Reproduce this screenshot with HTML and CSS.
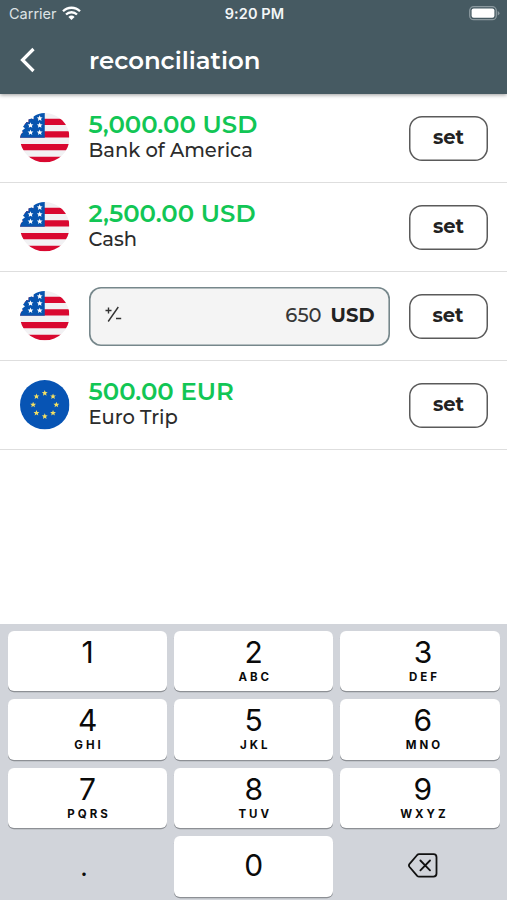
FILE: index.html
```html
<!DOCTYPE html>
<html lang="en">
<head>
<meta charset="utf-8">
<title>reconciliation</title>
<link rel="stylesheet" href="styles.css">
</head>
<body>
<svg width="0" height="0" class="defs">
  <defs>
    <clipPath id="round"><path d="M24.5 0A24.5 24.5 0 1 1 0 24.5L1 21 3 19 2 17.5 5 15 3 13.5 6.5 9 8.5 9.5 8.5 6.5 11.5 5.5 13.5 6.5 13.5 3.5Q18 0 24.5 0Z"/></clipPath>
    <path id="star" d="M0-3 .8-1 2.9-.9 1.3.4 1.8 2.5 0 1.3-1.8 2.5-1.3.4-2.9-.9-.8-1Z"/>
    <symbol id="us" viewBox="0 0 49 49">
      <g clip-path="url(#round)">
        <path fill="#f2f1f3" d="M0 0h49v49H0z"/>
        <path fill="#d90830" d="M0 5.8h49v6.2H0zM0 18h49v6.3H0zM0 30.6h49v6.2H0zM0 43.2h49V49H0z"/>
        <path fill="#0754af" d="M0 0h24.5v24.4H0z"/>
        <g fill="#fff">
          <use href="#star" x="19.5" y="5.3"/>
          <use href="#star" x="10.4" y="12.2"/><use href="#star" x="19.5" y="12.2"/>
          <use href="#star" x="10.4" y="19.3"/><use href="#star" x="19.5" y="19.3"/>
        </g>
      </g>
    </symbol>
    <symbol id="eu" viewBox="0 0 49 49">
      <circle cx="24.5" cy="24.5" r="24.5" fill="#0754b4"/>
      <g fill="#f3df62">
        <use href="#star" x="24.5" y="13"/><use href="#star" x="32.7" y="16.3"/>
        <use href="#star" x="36" y="24.5"/><use href="#star" x="32.7" y="32.7"/>
        <use href="#star" x="24.5" y="36"/><use href="#star" x="16.3" y="32.7"/>
        <use href="#star" x="13" y="24.5"/><use href="#star" x="16.3" y="16.3"/>
      </g>
    </symbol>
  </defs>
</svg>
<div class="screen">
  <header class="header">
    <div class="status">
      <div class="carrier">Carrier
        <svg width="19" height="15" viewBox="0 0 19 15" fill="none" stroke="#fff" stroke-width="2.3">
          <path d="M1 5.3a12 12 0 0 1 17 0"/><path d="M4 8.5a7.8 7.8 0 0 1 11 0"/>
          <path d="M9.5 14 6.4 10.9a4.4 4.4 0 0 1 6.2 0Z" fill="#fff" stroke="none"/>
        </svg>
      </div>
      <div class="time">9:20 PM</div>
      <svg class="battery" width="31" height="15" viewBox="0 0 31 15">
        <rect x=".7" y=".7" width="26.6" height="13" rx="4" fill="none" stroke="#8b999f" stroke-width="1.3"/>
        <rect x="2.6" y="2.6" width="22.8" height="9.2" rx="2" fill="#fff"/>
        <path d="M28.7 5v4.5q1.8-.7 1.8-2.2T28.7 5Z" fill="#8b999f"/>
      </svg>
    </div>
    <div class="titlebar">
      <svg class="back" width="16" height="26" viewBox="0 0 16 26" fill="none" stroke="#fff" stroke-width="3.2"><path d="M13.5 2 2.5 13l11 11"/></svg>
      <h1 class="title">reconciliation</h1>
    </div>
  </header>
  <main class="list">
    <div class="row">
      <svg class="flag"><use href="#us"/></svg>
      <div class="info"><div class="amount">5,000.00 USD</div><div class="name">Bank of America</div></div>
      <button class="set">set</button>
    </div>
    <div class="row">
      <svg class="flag"><use href="#us"/></svg>
      <div class="info"><div class="amount">2,500.00 USD</div><div class="name">Cash</div></div>
      <button class="set">set</button>
    </div>
    <div class="row">
      <svg class="flag"><use href="#us"/></svg>
      <div class="field">
        <svg width="17" height="17" viewBox="0 0 17 17" fill="none" stroke="#333" stroke-width="1.4"><path d="M.5 4.5h6M3.5 1.5v6M13.3 1 3.2 15.5M11 12.5h5.2"/></svg>
        <span class="value">650</span><span class="currency">USD</span>
      </div>
      <button class="set">set</button>
    </div>
    <div class="row">
      <svg class="flag"><use href="#eu"/></svg>
      <div class="info"><div class="amount">500.00 EUR</div><div class="name">Euro Trip</div></div>
      <button class="set">set</button>
    </div>
  </main>
  <div class="keypad">
    <div class="key"><b>1</b></div>
    <div class="key"><b>2</b><i>ABC</i></div>
    <div class="key right"><b>3</b><i>DEF</i></div>
    <div class="key"><b>4</b><i>GHI</i></div>
    <div class="key"><b>5</b><i>JKL</i></div>
    <div class="key right"><b>6</b><i>MNO</i></div>
    <div class="key"><b>7</b><i>PQRS</i></div>
    <div class="key"><b>8</b><i>TUV</i></div>
    <div class="key right"><b>9</b><i>WXYZ</i></div>
    <div class="key plain dot"><b>.</b></div>
    <div class="key zero"><b>0</b></div>
    <div class="key plain">
      <svg width="30" height="25" viewBox="0 0 30 25" fill="none" stroke="#111" stroke-width="1.8" stroke-linejoin="round" stroke-linecap="round"><path d="M11 1.2h14.5a3 3 0 0 1 3 3v16.4a3 3 0 0 1-3 3H11q-1 0-1.8-.8L1.6 14q-1.3-1.6 0-3.2L9.2 2q.8-.8 1.8-.8ZM12.4 7.5l9.6 9.8M22 7.5l-9.6 9.8"/></svg>
    </div>
  </div>
</div>
</body>
</html>
```

FILE: styles.css
```css
* { box-sizing: border-box; }
body { margin: 0; background: #fff; font-family: Montserrat, Inter, "Liberation Sans", sans-serif; }
.defs { position: absolute; }
.screen { width: 507px; height: 900px; display: flex; flex-direction: column; overflow: hidden; }
.header { height: 94px; flex: none; background: #465a62; color: #fff; box-shadow: 0 1px 4px rgba(0,0,0,.4); }
.status { height: 27px; display: grid; grid-template-columns: 1fr auto 1fr; align-items: center; padding: 0 7px 0 9px; font-family: Inter, sans-serif; font-size: 14.5px; color: #f3f6f7; }
.carrier { display: flex; align-items: center; gap: 5px; color: #dde3e5; }
.time { font-weight: 600; letter-spacing: .1px; }
.battery { justify-self: end; }
.titlebar { display: flex; align-items: center; height: 65px; padding-left: 20px; }
.back { margin-right: 53px; }
.title { margin: 0; font-size: 24.4px; font-weight: 600; line-height: 30px; }
.list { flex: 1; }
.row { height: 89px; display: flex; align-items: center; padding: 0 19px 0 20px; border-bottom: 1px solid #dedede; }
.flag { width: 49.5px; height: 49.5px; flex: none; margin-right: 19px; }
.info { flex: 1; white-space: nowrap; padding-bottom: 3px; }
.amount { font-size: 24.4px; line-height: 27px; font-weight: 600; color: #12c655; }
.name { font-size: 19.5px; line-height: 25px; font-weight: 500; color: #2c2c2c; }
.set { width: 79px; height: 45px; flex: none; padding: 0 0 2px; border: 0; box-shadow: inset 0 0 0 1.5px #5a5a5a; border-radius: 13px; background: #fff; font: 700 19.5px Montserrat, Inter, sans-serif; color: #222; }
.field { width: 301px; height: 59px; margin-right: 19px; padding: 0 15px 3px 16px; display: flex; align-items: center; background: #f4f4f4; box-shadow: inset 0 0 0 1.6px #76878b; border-radius: 12px; color: #222; font-size: 19.5px; }
.value { margin-left: auto; color: #383838; font-weight: 500; }
.currency { margin-left: 9px; font-weight: 700; }
.keypad { height: 276px; flex: none; padding: 7px 7.5px 0 8px; display: grid; grid-template-columns: repeat(3, 1fr); grid-auto-rows: 60.3px; gap: 8.2px 7px; background: #d1d4da; font-family: Inter, sans-serif; }
.key { display: flex; flex-direction: column; align-items: center; background: #fff; border-radius: 6px; box-shadow: 0 1.3px 0 #8d9095; color: #0a0a0a; }
.key b { font-size: 30px; line-height: 30px; font-weight: 400; margin-top: 6px; }
.key i { font-size: 11.5px; line-height: 14px; font-style: normal; font-weight: 700; letter-spacing: 3px; margin-top: 3px; padding-left: 3px; }
.right { padding-left: 6px; }
.plain { background: none; box-shadow: none; justify-content: center; }
.dot b { margin: 0 7px 0 0; font-size: 26px; }
.zero b { margin-top: 14px; }
.plain svg { margin-left: 7px; margin-top: -2px; }
```
